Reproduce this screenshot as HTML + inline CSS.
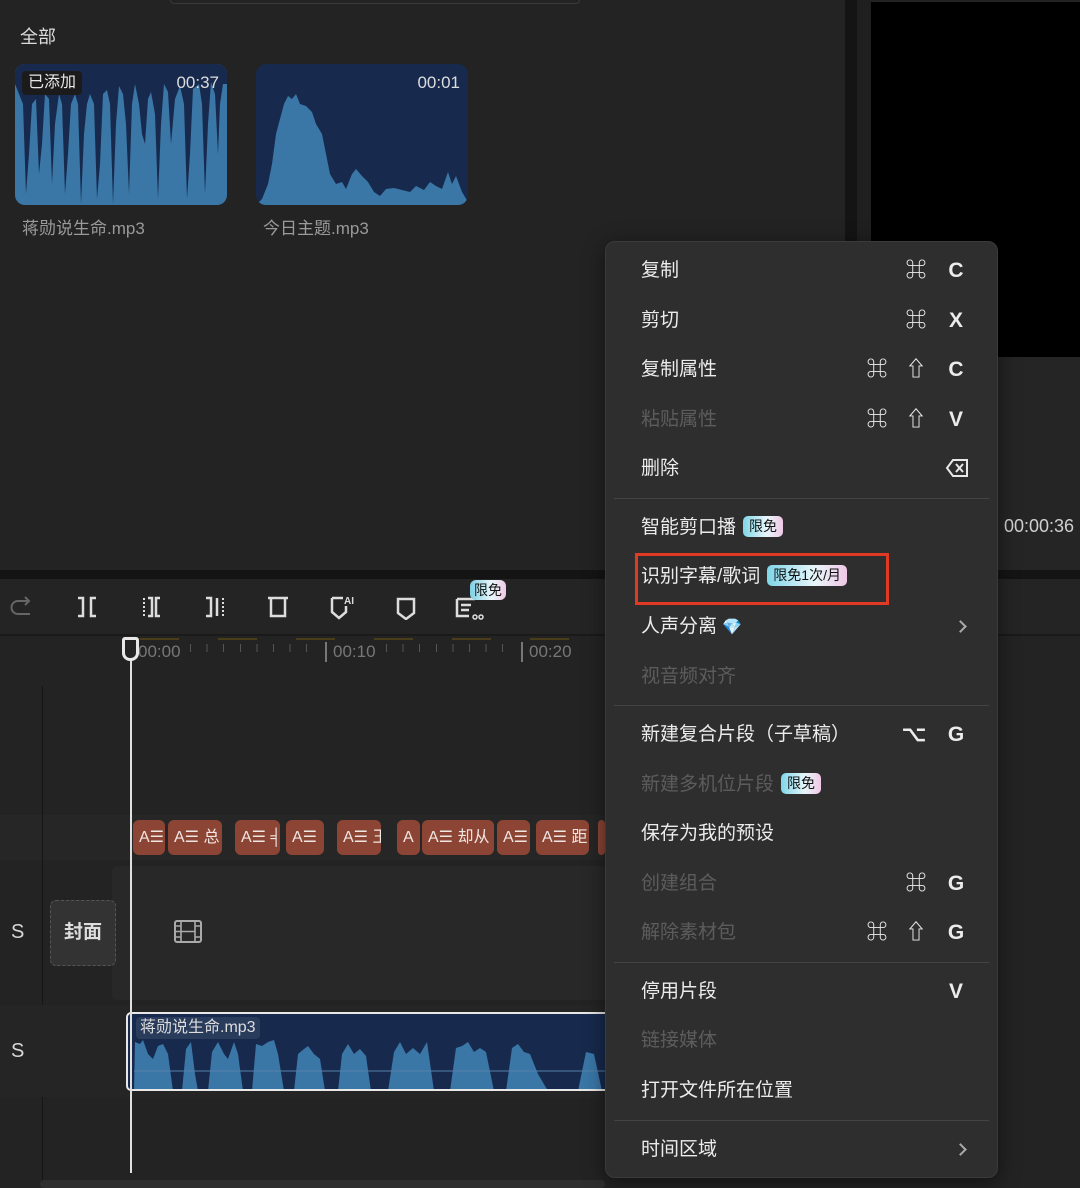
<!DOCTYPE html>
<html><head><meta charset="utf-8">
<style>
*{margin:0;padding:0;box-sizing:border-box}
body{width:1080px;height:1188px;background:#232323;position:relative;overflow:hidden;font-family:"Liberation Sans","Noto Sans CJK SC",sans-serif;color:#e6e6e6}
.a{position:absolute}
.menu{left:605px;top:241px;width:393px;height:937px;background:#2e2e2e;border-radius:10px;border:1px solid #3a3a3a;box-shadow:0 4px 20px rgba(0,0,0,.5)}
.it{position:absolute;left:35px;font-size:19px;color:#ececec;line-height:24px}
.dis{color:#5c5c5c}
.sc{position:absolute;font-size:21px;color:#ececec;width:30px;text-align:center;line-height:24px;font-weight:bold}
.sep{position:absolute;left:8px;right:8px;height:1px;background:#444}
.badge{display:inline-block;font-size:14px;line-height:21px;padding:0 6px;border-radius:5px;color:#111;background:linear-gradient(90deg,#7fd6e8,#e8f6fb 60%,#f0c8e6);vertical-align:2px;margin-left:7px}
.chip{position:absolute;top:820px;height:35px;background:#8c4535;border-radius:6px;color:#f0e6e2;font-size:16px;line-height:35px;padding-left:6px;overflow:hidden;white-space:nowrap}
.chev{position:absolute;width:9px;height:9px;border-right:2.5px solid #aaa;border-top:2.5px solid #aaa;transform:rotate(45deg)}
</style></head><body>

<div class="a" style="left:170px;top:0;width:410px;height:4px;border:1px solid #3a3a3a;border-top:none;border-radius:0 0 6px 6px"></div>
<div class="a" style="left:20px;top:23px;font-size:18px;color:#dcdcdc">全部</div>

<div class="a" style="left:15px;top:64px;width:212px;height:141px;border-radius:10px;overflow:hidden;background:#3a76a6">
<svg width="212" height="141" style="position:absolute;left:0;top:0"><path fill="#172a4d" d="M0,0 H212 V20 L208,20 205,40 203,90 200,30 196,18 193,60 190,130 187,40 184,20 178,25 175,90 172,135 169,40 165,22 160,35 156,80 153,28 149,20 146,60 143,135 140,50 136,28 133,35 130,80 127,70 124,40 120,20 117,40 114,130 111,60 108,30 104,22 101,60 98,140 95,40 92,26 88,30 85,100 82,135 79,40 75,30 72,40 69,70 66,140 63,40 60,30 56,40 53,90 50,130 47,40 44,30 40,60 37,120 34,35 30,30 27,80 24,110 21,35 17,40 14,90 11,130 8,40 4,30 0,20Z"/></svg>
<div class="a" style="left:7px;top:7px;background:#1b1b1b;padding:0 6px;border-radius:4px;font-size:16px;line-height:24px;color:#e6e6e6">已添加</div>
<div class="a" style="right:8px;top:9px;font-size:17px;color:#ddd">00:37</div>
</div>
<div class="a" style="left:22px;top:214px;font-size:17px;color:#9a9a9a">蒋勋说生命.mp3</div>

<div class="a" style="left:256px;top:64px;width:212px;height:141px;border-radius:10px;overflow:hidden;background:#172a4d">
<svg width="212" height="141" style="position:absolute;left:0;top:0"><path fill="#3a76a6" d="M0,141 L6,135 12,120 16,100 20,70 24,55 28,40 32,32 36,35 40,30 44,40 50,42 56,48 60,60 66,70 70,90 74,110 80,120 86,118 90,125 96,110 100,105 106,112 112,118 118,128 124,132 130,125 138,124 146,126 154,128 160,122 168,126 174,118 180,122 186,125 192,108 196,120 200,112 206,128 212,138 V141Z"/></svg>
<div class="a" style="right:8px;top:9px;font-size:17px;color:#ddd">00:01</div>
</div>
<div class="a" style="left:263px;top:214px;font-size:17px;color:#9a9a9a">今日主题.mp3</div>

<div class="a" style="left:845px;top:0;width:12px;height:570px;background:#141414"></div>
<div class="a" style="left:857px;top:0;width:14px;height:570px;background:#1f1f1f"></div>
<div class="a" style="left:871px;top:2px;width:209px;height:355px;background:#000"></div>
<div class="a" style="left:871px;top:357px;width:209px;height:213px;background:#252525"></div>
<div class="a" style="left:1004px;top:516px;font-size:18px;color:#d0d0d0">00:00:36</div>

<div class="a" style="left:0;top:570px;width:1080px;height:9px;background:#141414"></div>
<div class="a" style="left:0;top:579px;width:1080px;height:55px;background:#242424"></div>
<div class="a" style="left:0;top:634px;width:1080px;height:2px;background:#1a1a1a"></div>

<svg class="a" style="left:10px;top:596px" width="24" height="24"><path d="M18 5 H8 a6 6 0 0 0 0 13 H20 M15 1 L19 5 15 9" fill="none" stroke="#666" stroke-width="2"/></svg>
<svg class="a" style="left:75px;top:595px" width="24" height="24"><path d="M3 3h5v18H3M21 3h-5v18h5" fill="none" stroke="#ddd" stroke-width="2.5"/></svg>
<svg class="a" style="left:140px;top:595px" width="24" height="24"><path d="M4 3v18" stroke="#ddd" stroke-width="2" stroke-dasharray="2 2"/><path d="M8 3h4v18H8M20 3h-4v18h4" fill="none" stroke="#ddd" stroke-width="2.5"/></svg>
<svg class="a" style="left:203px;top:595px" width="24" height="24"><path d="M20 3v18" stroke="#ddd" stroke-width="2" stroke-dasharray="2 2"/><path d="M3 3h5v18H3" fill="none" stroke="#ddd" stroke-width="2.5"/><path d="M14 3v18" stroke="#ddd" stroke-width="2.5"/></svg>
<svg class="a" style="left:266px;top:594px" width="24" height="26"><path d="M2 4h20M5 4v18h14V4" fill="none" stroke="#ddd" stroke-width="2.5"/></svg>
<svg class="a" style="left:329px;top:594px" width="26" height="26"><path d="M3 4h11M3 4v14l7 6 7-6v-6" fill="none" stroke="#ddd" stroke-width="2.5"/><text x="15" y="10" font-size="10" fill="#ddd" font-family="Liberation Sans" font-weight="bold">AI</text></svg>
<svg class="a" style="left:394px;top:596px" width="24" height="24"><path d="M4 3h16v14l-8 6-8-6z" fill="none" stroke="#ddd" stroke-width="2.5"/></svg>
<svg class="a" style="left:455px;top:596px" width="30" height="26"><path d="M2 3h18M2 3v17h12M6 9h10M6 14h8" fill="none" stroke="#ddd" stroke-width="2.5"/><circle cx="20" cy="21" r="2" fill="none" stroke="#ddd" stroke-width="1.5"/><circle cx="26" cy="21" r="2" fill="none" stroke="#ddd" stroke-width="1.5"/></svg>
<div class="a" style="left:470px;top:580px;font-size:14px;line-height:20px;padding:0 4px;border-radius:6px;color:#111;background:linear-gradient(90deg,#7fd0e4,#eaf6fa 60%,#f0c8e6)">限免</div>

<div class="a" style="left:140px;top:638px;width:465px;height:2px;background:linear-gradient(90deg,#4a3e1a 0 50%,transparent 50%) 0 0/78px 2px"></div>
<div class="a" style="left:138px;top:642px;font-size:17px;color:#777">00:00</div>
<div class="a" style="left:325px;top:642px;font-size:17px;color:#777;border-left:2px solid #777;padding-left:6px;line-height:20px">00:10</div>
<div class="a" style="left:521px;top:642px;font-size:17px;color:#777;border-left:2px solid #777;padding-left:6px;line-height:20px">00:20</div>
<div class="a" style="left:190px;top:644px;width:130px;height:8px;background:repeating-linear-gradient(90deg,#555 0 1px,transparent 1px 16.6px)"></div>
<div class="a" style="left:386px;top:644px;width:130px;height:8px;background:repeating-linear-gradient(90deg,#555 0 1px,transparent 1px 16.6px)"></div>

<div class="a" style="left:0;top:815px;width:605px;height:45px;background:#262626"></div>
<div class="a" style="left:42px;top:686px;width:1px;height:502px;background:#151515"></div>
<div class="a" style="left:112px;top:866px;width:493px;height:134px;background:#282828;border-radius:6px 0 0 6px"></div>
<div class="a" style="left:0;top:1005px;width:605px;height:92px;background:#252525"></div>
<div class="a" style="left:40px;top:1180px;width:565px;height:8px;background:#2e2e2e;border-radius:4px"></div>

<div class="chip" style="left:133px;width:32px">A☰</div>
<div class="chip" style="left:168px;width:54px">A☰ 总</div>
<div class="chip" style="left:235px;width:45px">A☰ ╡</div>
<div class="chip" style="left:286px;width:38px">A☰</div>
<div class="chip" style="left:337px;width:44px">A☰ 王</div>
<div class="chip" style="left:397px;width:23px">A</div>
<div class="chip" style="left:422px;width:72px">A☰ 却从</div>
<div class="chip" style="left:497px;width:33px">A☰</div>
<div class="chip" style="left:536px;width:53px">A☰ 距</div>
<div class="chip" style="left:598px;width:7px"></div>

<div class="a" style="left:11px;top:921px;font-size:20px;color:#d8d8d8">S</div>
<div class="a" style="left:11px;top:1040px;font-size:20px;color:#d8d8d8">S</div>
<div class="a" style="left:50px;top:900px;width:66px;height:66px;border:1px dashed #555;border-radius:6px;background:#333;font-size:19px;font-weight:bold;line-height:64px;text-align:center;color:#ddd">封面</div>
<svg class="a" style="left:174px;top:920px" width="28" height="24"><rect x="1" y="1" width="26" height="21" rx="2" fill="none" stroke="#aaa" stroke-width="2"/><path d="M7 1v21M21 1v21M7 11.5h14M1 6h6M1 11.5h6M1 17h6M21 6h6M21 17h6" stroke="#aaa" stroke-width="1.6"/></svg>

<div class="a" style="left:126px;top:1012px;width:479px;height:79px;background:#172a4d;border:2px solid #e8e8e8;border-right:none;border-radius:5px 0 0 5px;overflow:hidden">
<svg width="479" height="79" style="position:absolute;left:0;top:0"><path fill="#3a76a6" d="M6,77 L7,28 12,30 15,26 20,40 25,45 30,32 35,30 40,40 45,77 54,77 58,35 63,28 67,60 70,77 80,77 84,38 90,28 96,40 100,45 106,28 110,40 115,77 124,77 128,30 134,32 140,28 146,26 150,40 156,77 166,77 170,40 176,35 180,32 186,40 192,45 197,77 210,77 214,40 220,30 226,40 232,35 238,42 243,77 260,77 266,38 272,28 278,40 285,34 292,40 299,28 306,77 322,77 328,34 334,32 340,28 346,38 352,34 358,38 366,77 378,77 384,34 390,30 396,38 402,40 410,60 420,77 450,77 458,38 466,40 474,77Z"/><path d="M6 57H479" stroke="#5580a8" stroke-width="1"/></svg>
<div class="a" style="left:8px;top:3px;background:#2a3c5c;padding:0 4px;border-radius:4px;font-size:16px;line-height:22px;color:#ddd">蒋勋说生命.mp3</div>
</div>

<div class="a" style="left:130px;top:650px;width:2px;height:523px;background:#e0e0e0"></div>
<div class="a" style="left:122px;top:637px;width:17px;height:24px;border:3px solid #e8e8e8;border-radius:3px 3px 8px 8px;background:#242424"></div>

<div class="a menu">
<div class="it" style="top:17px">复制</div><div class="sc" style="left:295px;top:17px">⌘</div><div class="sc" style="left:335px;top:17px">C</div>
<div class="it" style="top:67px">剪切</div><div class="sc" style="left:295px;top:67px">⌘</div><div class="sc" style="left:335px;top:67px">X</div>
<div class="it" style="top:116px">复制属性</div><div class="sc" style="left:256px;top:116px">⌘</div><div class="sc" style="left:295px;top:116px">⇧</div><div class="sc" style="left:335px;top:116px">C</div>
<div class="it dis" style="top:166px">粘贴属性</div><div class="sc dis" style="left:256px;top:166px">⌘</div><div class="sc dis" style="left:295px;top:166px">⇧</div><div class="sc dis" style="left:335px;top:166px">V</div>
<div class="it" style="top:215px">删除</div>
<svg class="a" style="left:339px;top:216px" width="24" height="20"><path d="M8 2h14v16H8L2 10z" fill="none" stroke="#e8e8e8" stroke-width="2"/><path d="M11 6l7 8M18 6l-7 8" stroke="#e8e8e8" stroke-width="2"/></svg>
<div class="sep" style="top:256px"></div>
<div class="it" style="top:274px">智能剪口播<span class="badge">限免</span></div>
<div class="it" style="top:323px">识别字幕/歌词<span class="badge">限免1次/月</span></div>
<div class="a" style="left:29px;top:311px;width:254px;height:52px;border:3px solid #e03a24"></div>
<div class="it" style="top:373px">人声分离 <span style="color:#8fdcf0;font-size:16px">💎</span></div><div class="chev" style="left:350px;top:380px"></div>
<div class="it dis" style="top:423px">视音频对齐</div>
<div class="sep" style="top:463px"></div>
<div class="it" style="top:481px">新建复合片段（子草稿）</div><div class="sc" style="left:293px;top:481px">⌥</div><div class="sc" style="left:335px;top:481px">G</div>
<div class="it dis" style="top:531px">新建多机位片段<span class="badge">限免</span></div>
<div class="it" style="top:580px">保存为我的预设</div>
<div class="it dis" style="top:630px">创建组合</div><div class="sc dis" style="left:295px;top:630px">⌘</div><div class="sc dis" style="left:335px;top:630px">G</div>
<div class="it dis" style="top:679px">解除素材包</div><div class="sc dis" style="left:256px;top:679px">⌘</div><div class="sc dis" style="left:295px;top:679px">⇧</div><div class="sc dis" style="left:335px;top:679px">G</div>
<div class="sep" style="top:720px"></div>
<div class="it" style="top:738px">停用片段</div><div class="sc" style="left:335px;top:738px">V</div>
<div class="it dis" style="top:787px">链接媒体</div>
<div class="it" style="top:837px">打开文件所在位置</div>
<div class="sep" style="top:878px"></div>
<div class="it" style="top:896px">时间区域</div><div class="chev" style="left:350px;top:903px"></div>
</div>
</body></html>
